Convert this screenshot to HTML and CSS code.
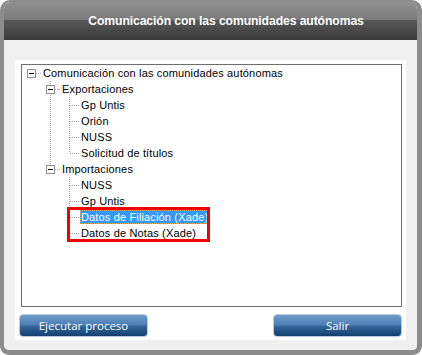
FILE: index.html
```html
<!DOCTYPE html>
<html lang="es">
  <head>
    <meta charset="UTF-8" />
    <title>Comunicación con las comunidades autónomas</title>
    <link rel="stylesheet" href="styles.css">
  </head>
  <body>
    <div class="window">
      <div class="titlebar">Comunicación con las comunidades autónomas</div>

      <div class="content">
        <div class="panel">
          <div class="treebox">
            <ul class="tree">
              <li class="root">
                <div class="row"><span class="twist"></span><span class="label">Comunicación con las comunidades autónomas</span></div>
                <ul>
                  <li>
                    <div class="row"><span class="twist"></span><span class="label">Exportaciones</span></div>
                    <ul>
                      <li><div class="row"><span class="label">Gp Untis</span></div></li>
                      <li><div class="row"><span class="label">Orión</span></div></li>
                      <li><div class="row"><span class="label">NUSS</span></div></li>
                      <li><div class="row"><span class="label">Solicitud de títulos</span></div></li>
                    </ul>
                  </li>
                  <li>
                    <div class="row"><span class="twist"></span><span class="label">Importaciones</span></div>
                    <ul>
                      <li><div class="row"><span class="label">NUSS</span></div></li>
                      <li><div class="row"><span class="label">Gp Untis</span></div></li>
                      <li><div class="row"><span class="label selected">Datos de Filiación (Xade)</span></div></li>
                      <li><div class="row"><span class="label">Datos de Notas (Xade)</span></div></li>
                    </ul>
                  </li>
                </ul>
              </li>
            </ul>

            <!-- highlight box drawn over the two Xade items -->
            <div class="mark"></div>
          </div>

          <div class="buttons">
            <button class="btn">Ejecutar proceso</button>
            <button class="btn">Salir</button>
          </div>
        </div>
      </div>
    </div>
  </body>
</html>
```

FILE: styles.css
```css
body {
  margin: 0;
  background: #ffffff;
  font-family: "Liberation Sans", Arial, sans-serif;
}

.window {
  width: 422px;
  height: 355px;
  box-sizing: border-box;
  border-style: solid;
  border-color: #8c8c8c;
  border-width: 2px 5px 5px 4px;
  border-radius: 10px 10px 9px 9px;
  background: #f0f0f0;
  overflow: hidden;
  display: flex;
  flex-direction: column;
}

.titlebar {
  height: 38px;
  flex: none;
  display: flex;
  align-items: center;
  justify-content: center;
  padding-left: 31px;
  background: linear-gradient(#8f8f8f, #7b7b7b 46%, #585858 47%, #3a3a3a);
  color: #ffffff;
  font-weight: bold;
  font-size: 12.2px;
  letter-spacing: -0.1px;
}

.content {
  flex: 1;
  padding: 20px 11px 10px 11px;
  display: flex;
}

.panel {
  flex: 1;
  background: #ffffff;
  padding: 4px 4px 3px 4px;
  display: flex;
  flex-direction: column;
}

.treebox {
  position: relative;
  height: 243px;
  box-sizing: border-box;
  margin-left: 2px;
  border: 1px solid #6e6e6e;
  background: #ffffff;
}

/* tree view */
.tree,
.tree ul {
  list-style: none;
  margin: 0;
  padding: 0;
}

.tree {
  padding-left: 3px;
  font-size: 11px;
  letter-spacing: 0.15px;
  color: #000000;
}

.tree ul {
  padding-left: 19px;
}

.tree li {
  position: relative;
}

.tree ul li::before {
  content: "";
  position: absolute;
  left: 6px;
  top: 0;
  bottom: 0;
  width: 1px;
  background: repeating-linear-gradient(to bottom, #a0a0a0 0 1px, transparent 1px 2px);
}

.tree ul li:last-child::before {
  bottom: auto;
  height: 8px;
}

.row {
  position: relative;
  height: 16px;
  display: flex;
  align-items: center;
}

.row::before {
  content: "";
  position: absolute;
  left: 7px;
  top: 8px;
  width: 10px;
  height: 1px;
  background: repeating-linear-gradient(to right, #a0a0a0 0 1px, transparent 1px 2px);
}

.twist {
  position: absolute;
  z-index: 1;
  left: 2px;
  top: 4px;
  width: 9px;
  height: 9px;
  box-sizing: border-box;
  border: 1px solid #919191;
  background: #ffffff;
}

.twist::after {
  content: "";
  position: absolute;
  left: 1px;
  top: 3px;
  width: 5px;
  height: 1px;
  background: #000000;
}

.label {
  margin-left: 17px;
  padding: 0 1px;
  height: 14px;
  line-height: 14px;
  white-space: nowrap;
}

.label.selected {
  background: #3399ff;
  color: #ffffff;
  outline: 1px dotted #e0b060;
  outline-offset: -1px;
}

.mark {
  position: absolute;
  left: 45px;
  top: 142px;
  width: 143px;
  height: 35px;
  box-sizing: border-box;
  border: 3px solid #f00000;
}

/* buttons */
.buttons {
  margin-top: 7px;
  display: flex;
  justify-content: space-between;
}

.btn {
  width: 129px;
  height: 23px;
  padding: 0;
  border: 1px solid #b9cadb;
  border-radius: 4px;
  background: linear-gradient(#6e9bcc, #4f80b6 45%, #35669b 55%, #113f6f);
  color: #ffffff;
  font-family: "Open Sans", sans-serif;
  font-size: 11.5px;
  cursor: pointer;
}
```
